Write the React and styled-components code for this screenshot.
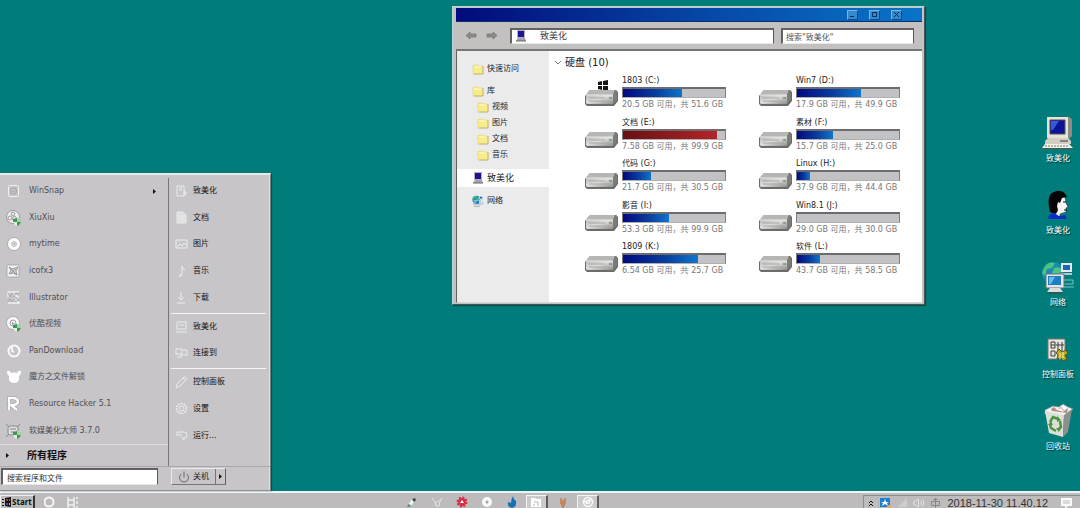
import styled, { createGlobalStyle, css } from "styled-components";
import { Power, Volume2 } from "lucide-react";

const GlobalStyle = createGlobalStyle`
    * {
        box-sizing: border-box;
    }
    body {
        margin: 0;
        overflow: hidden;
        font-family: "DejaVu Sans", "Noto Sans CJK SC", sans-serif;
        font-size: 8px;
        line-height: 12px;
        color: #1c1c1e;
    }
    button, input {
        font: inherit;
        color: inherit;
        padding: 0;
        margin: 0;
        border: 0;
        background: none;
    }
    input {
        min-width: 0;
        outline: none;
    }
    a {
        color: inherit;
        text-decoration: none;
    }
    ul {
        list-style: none;
        margin: 0;
        padding: 0;
    }
    svg {
        display: block;
        flex: none;
    }
`

const Screen = styled.div`
    display: flex;
    flex-direction: column;
    height: 100vh;
    background: #007c7a;
`
const Desktop = styled.main`
    position: relative;
    display: flex;
    justify-content: flex-end;
    flex: 1;
    min-height: 0;
`

/* desktop icons */
const Shortcuts = styled.ul`
    display: flex;
    flex-direction: column;
    gap: 6px;
    width: 44px;
    padding-top: 114px;
`
const Shortcut = styled.a`
    display: flex;
    flex-direction: column;
    align-items: center;
    justify-content: space-between;
    height: 66px;
    padding-bottom: 15px;
    color: #fff;
    white-space: nowrap;
    text-shadow: 1px 1px 1px #002c2c;
`
const ShortcutPicture = styled.span`
    display: flex;
    align-items: center;
    height: 38px;
`

/* start menu */
const StartMenu = styled.nav`
    position: absolute;
    left: 0;
    bottom: 0;
    display: grid;
    grid-template-columns: 169px 101px;
    padding-top: 3px;
    background: #c7c5c8;
    border-top: 2px solid #e4eaea;
    border-right: 1px solid #72807f;
    border-bottom: 1px solid #8e8e90;
    box-shadow: 1px 0 1px #075452, inset -1px 0 0 #e2e0e2;
`
const Programs = styled.ul`
    display: grid;
    grid-auto-rows: 1fr;
    height: 266px;
`
const ProgramLink = styled.a`
    display: flex;
    align-items: center;
    height: 100%;
    gap: 6px;
    padding: 0 11px 0 4px;
    color: #4f4e53;

    span {
        flex: 1;
    }
`
const MenuSide = styled.div`
    display: flex;
    flex-direction: column;
    border-right: ${(props) => (props.$line ? "1px solid #77757a" : "0")};
`
const AllPrograms = styled.button`
    display: flex;
    align-items: center;
    gap: 17px;
    height: 22px;
    padding-left: 5px;
    border-top: 1px solid #dddcde;
    font-size: 10px;
    font-weight: 700;
    color: #111;
`
const Places = styled.ul`
    display: grid;
    grid-auto-rows: 1fr;
    height: ${(props) => props.$height}px;
    margin: 0 4px 0 2px;
    padding-bottom: ${(props) => (props.$last ? 0 : 2)}px;
    border-bottom: ${(props) => (props.$last ? "0" : "1px solid #f4f4f4")};
`
const PlaceLink = styled.a`
    display: flex;
    align-items: center;
    gap: 5px;
    height: 100%;
    padding-left: 4px;
    color: #141416;
`
const MenuFooter = styled.div`
    display: flex;
    grid-column: 1 / 3;
    height: 24px;
    padding: 1px 0 5px 1px;
    gap: 13px;
    border-top: 1px solid #aaa8ab;
`
const sunken = css`
    background: #fff;
    border-top: 2px solid #626065;
    border-left: 2px solid #626065;
    border-right: 1px solid #55555a;
    border-bottom: 1px solid #e8e8e8;
`
const MenuSearch = styled.input`
    ${sunken}
    width: 157px;
    height: 17px;
    padding-left: 4px;
    color: #333;
`
const ShutDown = styled.div`
    display: flex;
    height: 17px;
    border: 1px solid #eceaec;
    border-right-color: #5f5d60;
    border-bottom-color: #77757a;

    button {
        display: flex;
        align-items: center;
        gap: 3px;
        padding: 0 6px 0 6px;
    }
    button + button {
        padding: 0 2px;
        border-left: 1px solid #77757a;
    }
`

/* explorer */
const Explorer = styled.section`
    position: absolute;
    top: 6px;
    left: 452px;
    width: 473px;
    padding: 1px 2px 1px 3px;
    background: #c4c2c4;
    border: 1px solid #b8d6d6;
    border-right-color: #455554;
    border-bottom-color: #455554;
    box-shadow: 1px 1px 1px #06504e;
`
const TitleBar = styled.header`
    display: flex;
    justify-content: flex-end;
    align-items: center;
    gap: 11px;
    height: 14px;
    padding-right: 20px;
    background: linear-gradient(90deg, #020a7c, #0644a4 50%, #0874c8);
    border-bottom: 1px solid #08306c;
`
const TitleButton = styled.button`
    display: grid;
    place-items: center;
    width: 11px;
    height: 10px;
    background: #3488cc;
    border: 1px solid #7cb4e0;
    border-right-color: #074c90;
    border-bottom-color: #074c90;
`
const ToolBar = styled.div`
    display: flex;
    align-items: center;
    height: 29px;
    gap: 7px;
    padding: 0 8px 0 9px;
    background: #c2c1c0;
    border-bottom: 2px solid #777675;
`
const NavButtons = styled.div`
    display: flex;
    gap: 9px;
    width: 38px;
`
const AddressBox = styled.label`
    ${sunken}
    display: flex;
    align-items: center;
    flex: 1;
    gap: 13px;
    height: 16px;
    padding-left: 3px;
    font-size: 9px;
    color: #3c3c3e;

    input {
        flex: 1;
    }
`
const SearchBox = styled.input`
    ${sunken}
    width: 133px;
    height: 16px;
    padding-left: 3px;
    color: #555;
`
const ExplorerBody = styled.div`
    display: grid;
    grid-template-columns: 92px 1fr;
    background: #fff;
    border-left: 1px solid #606062;
    border-bottom: 1px solid #d6d6d6;
`
const Tree = styled.nav`
    padding-top: 10px;
    background: #ebebeb;
`
const TreeLink = styled.a`
    display: flex;
    align-items: center;
    gap: 3px;
    height: ${(props) => (props.$active ? 18 : 16)}px;
    margin-top: ${(props) => (props.$gap || 0)}px;
    padding-left: ${(props) => (props.$child ? 20 : 15)}px;
    background: ${(props) => (props.$active ? "#fff" : "none")};
    font-size: ${(props) => (props.$active ? 9 : 8)}px;
`
const Files = styled.div`
    padding: 5px 22px 19px 5px;
`
const GroupTitle = styled.h2`
    display: flex;
    align-items: center;
    gap: 3px;
    margin: 0;
    font-size: 10px;
    line-height: 14px;
    font-weight: 400;
`
const Disks = styled.ul`
    display: grid;
    grid-template-columns: 1fr 1fr;
    grid-auto-rows: 1fr;
    column-gap: 33px;
    height: 213px;
    padding-left: 31px;
    padding-top: 5px;
`
const Disk = styled.li`
    display: grid;
    grid-template-columns: 34px 1fr;
    align-content: start;
    gap: 3px;
`
const DiskPicture = styled.div`
    padding-top: 4px;
`
const DiskInfo = styled.div`
    white-space: nowrap;
    color: #222;

    p {
        margin: 0;
    }
    p:last-child {
        color: #77777a;
    }
`
const Meter = styled.div`
    height: 11px;
    margin-bottom: 1px;
    background: #c2c1c4;
    border: 1px solid #7e7e80;
    border-top: 2px solid #6c6c70;
    border-bottom-color: #b0b0b2;
`
const MeterFill = styled.div`
    height: 100%;
    background: ${(props) =>
        props.$full
            ? "linear-gradient(90deg, #681012, #b4242a)"
            : "linear-gradient(90deg, #020a80, #0a3c9c 55%, #1074cc)"};
`

/* taskbar */
const TaskBar = styled.footer`
    display: flex;
    height: 17px;
    padding-top: 2px;
    background: #bdbbbc;
    border-top: 2px solid #eef2f2;
    overflow: hidden;
`
const TaskLeft = styled.div`
    display: flex;
    align-items: flex-start;
    gap: 6px;
    width: 399px;
`
const StartButton = styled.button`
    display: flex;
    align-items: center;
    gap: 1px;
    width: 35px;
    height: 14px;
    padding-left: 1px;
    border: 1px solid #f0f0f0;
    border-right: 2px solid #333;
    border-bottom-color: #333;
    font-family: "Noto Sans", sans-serif;
    font-weight: 700;
    color: #111;
`
const TaskButton = styled.button`
    display: grid;
    place-items: center;
    width: ${(props) => (props.$wide ? 25 : 17)}px;
    height: 16px;
    padding: 0 0 2px;
`
const TaskCentre = styled.div`
    display: flex;
    flex: 1;
    align-items: flex-start;
`
const OpenTask = styled(TaskButton)`
    width: 22px;
    margin: 0 2px;
    background: #cccacb;
    border: 1px solid #f4f4f4;
    border-right: 2px solid #5e5e60;
`
const Tray = styled.div`
    display: flex;
    align-items: center;
    gap: 5px;
    height: 14px;
    padding: 0 7px 0 4px;
    border-top: 1px solid #8c8c8e;
    border-left: 1px solid #8c8c8e;
`
const Clock = styled.time`
    font-family: "Liberation Sans", sans-serif;
    font-size: 11px;
    color: #333336;
    white-space: nowrap;
    padding: 0 7px 0 1px;
`

const Caret = () => (
    <svg width="5" height="7" viewBox="0 0 5 7">
        <path d="M1 1l3 2.500L1 6z" fill="#111" />
    </svg>
)

const Shield = () => (
    <g>
        <path d="M9 10l4-1 4 1v3q-1 3-4 4-3-1-4-4z" fill="#e4ece4" />
        <path d="M9 10l4-1v4H9zM13 13h4q-1 3-4 4z" fill="#3c9a4c" />
        <path d="M13 9l4 1v3h-4z" fill="#a8d0a8" />
    </g>
)

const programArt = {
    snap: (
        <g fill="none" stroke="#efefef">
            <rect x="4.500" y="3.500" width="10" height="11" rx="1" />
            <circle cx="9.500" cy="9" r="3" stroke="#a2a2a4" />
            <path d="M8 9h3" stroke="#a2a2a4" />
        </g>
    ),
    xiu: (
        <g>
            <circle cx="9" cy="8" r="6.500" fill="#f0f0f0" stroke="#98989a" />
            <circle cx="9" cy="5" r="1.800" fill="none" stroke="#98989a" />
            <circle cx="6" cy="9" r="2" fill="none" stroke="#98989a" />
            <circle cx="10.500" cy="9.500" r="2" fill="none" stroke="#98989a" />
            <Shield />
        </g>
    ),
    time: (
        <g>
            <circle cx="10" cy="9" r="6.500" fill="#fbfbfb" stroke="#98989a" strokeWidth=".7" />
            <circle cx="10" cy="9" r="2.500" fill="#ddd" stroke="#c4c4c6" />
            <path d="M10 8v1h1" stroke="#888" fill="none" strokeWidth=".8" />
        </g>
    ),
    fox: (
        <g>
            <rect x="3" y="3" width="12" height="12" rx="1" fill="#f2f2f2" stroke="#98989a" strokeWidth=".7" />
            <path d="M5 5l3 2 3-1 3-1-2 4 1 4-4-2-4 1 2-4z" fill="#d4d4d6" stroke="#8c8c90" strokeWidth=".8" />
            <path d="M5 5l8 8M7 11l5-4" stroke="#8c8c90" strokeWidth=".8" />
        </g>
    ),
    ai: (
        <g fill="none" stroke="#f0f0f0">
            <path d="M4 3h11M4 3v5M8 5l7 3M4 14h12M10 10l5 4" strokeWidth="1.500" />
            <path d="M4 4l2 4 2-4 2 4 2-4 3 1M4 13l2-3 2 3 2-3 2 3 3-3" stroke="#a0a0a3" strokeWidth=".8" />
        </g>
    ),
    youku: (
        <g>
            <circle cx="9" cy="8" r="6.500" fill="#f8f8f8" stroke="#98989a" strokeWidth=".7" />
            <circle cx="9" cy="8" r="3" fill="none" stroke="#a0a0a3" />
            <path d="M8 7v3l3-1.500z" fill="#a0a0a3" />
            <Shield />
        </g>
    ),
    pan: (
        <g>
            <circle cx="10" cy="9" r="5.500" fill="none" stroke="#fafafa" strokeWidth="2" />
            <path d="M8 4v5l2 1" fill="none" stroke="#f4f4f4" strokeWidth="2" />
        </g>
    ),
    cube: (
        <path d="M3 3q3-1 4 2 3-1 6 0 1-3 4-2 0 4-2 5 1 7-5 7t-5-7Q3 7 3 3z" fill="#fff" />
    ),
    res: (
        <g fill="none">
            <path d="M5 15V3h5q4 1 4 3.500T10 10H7l6 5" stroke="#8c8c90" strokeWidth="3.500" />
            <path d="M5 15V3h5q4 1 4 3.500T10 10H7l6 5" stroke="#fff" strokeWidth="2.500" />
        </g>
    ),
    master: (
        <g>
            <rect x="4" y="4" width="10" height="9" rx="2" fill="#dedee0" stroke="#88888b" />
            <path d="M2 2l3 3M16 2l-3 3M2 15l3-3M6 7h6M7 10h4" stroke="#88888b" fill="none" />
            <Shield />
        </g>
    ),
}

const programs = [
    { name: "WinSnap", icon: "snap", more: true },
    { name: "XiuXiu", icon: "xiu" },
    { name: "mytime", icon: "time" },
    { name: "icofx3", icon: "fox" },
    { name: "Illustrator", icon: "ai" },
    { name: "优酷视频", icon: "youku" },
    { name: "PanDownload", icon: "pan" },
    { name: "魔方之文件解锁", icon: "cube" },
    { name: "Resource Hacker 5.1", icon: "res" },
    { name: "软媒美化大师 3.7.0", icon: "master" },
]

const placeArt = {
    user: <path d="M2 1h7v10H2zM4 3h3M4 5h3M10 5v6M8 8h4" />,
    doc: <path d="M2 1h6l3 3v8H2zM4 5h5M4 7h5M4 9h5" fill="#dedede" />,
    image: <path d="M1 2h11v8H1zM2 9l3-3 2 2 2-3 3 3M4 4h1" />,
    music: <path d="M7 10V1q0 3 3 4M7 10q-3-1-3 1t3-1" />,
    down: <path d="M6 1v8M3 6l3 3 3-3M2 12h8" />,
    pc: <path d="M2 1h9v7H2zM1 11h11M4 4h5" />,
    link: <path d="M1 2h6v5H1zM8 3h4v5H6v3M2 10h3" />,
    panel: <path d="M1 12l1-4 7-7q2 0 3 2l-7 7zM8 2l3 3" />,
    gear: (
        <g>
            <circle cx="6.500" cy="6.500" r="5" strokeDasharray="2 .8" strokeWidth="1.500" />
            <circle cx="6.500" cy="6.500" r="2.500" />
        </g>
    ),
    run: <path d="M2 7V3h7q3 0 3 3t-3 3M7 6H3M6 8l3 3v-3" />,
}

const places = [
    {
        height: 136,
        items: [
            ["致美化", "user"],
            ["文档", "doc"],
            ["图片", "image"],
            ["音乐", "music"],
            ["下载", "down"],
        ],
    },
    {
        height: 55,
        items: [
            ["致美化", "pc"],
            ["连接到", "link"],
        ],
    },
    {
        height: 80,
        items: [
            ["控制面板", "panel"],
            ["设置", "gear"],
            ["运行...", "run"],
        ],
    },
]

const disks = [
    { name: "1803 (C:)", free: "20.5", total: "51.6", used: 58, system: true },
    { name: "Win7 (D:)", free: "17.9", total: "49.9", used: 63 },
    { name: "文档 (E:)", free: "7.58", total: "99.9", used: 92, full: true },
    { name: "素材 (F:)", free: "15.7", total: "25.0", used: 35 },
    { name: "代码 (G:)", free: "21.7", total: "30.5", used: 27 },
    { name: "Linux (H:)", free: "37.9", total: "44.4", used: 13 },
    { name: "影音 (I:)", free: "53.3", total: "99.9", used: 45 },
    { name: "Win8.1 (J:)", free: "29.0", total: "30.0", used: 0 },
    { name: "1809 (K:)", free: "6.54", total: "25.7", used: 74 },
    { name: "软件 (L:)", free: "43.7", total: "58.5", used: 23 },
]

const Folder = () => (
    <svg width="12" height="11" viewBox="0 0 12 11">
        <path d="M1 1h5l1 1h4v8H1z" fill="#f6ec8c" stroke="#e2d27a" strokeWidth=".6" />
        <path d="M11 2v8H2" stroke="#c4b878" fill="none" />
        <path d="M2 3h7" stroke="#fffbd0" />
    </svg>
)

const Computer = ({ size }) => (
    <svg width={size} height={size} viewBox="0 0 34 34">
        <path d="M8 1h20l3 2v17l-3 3H8z" fill="#8f8b84" />
        <path d="M6 1h21v21H6z" fill="#e6e2d8" />
        <path d="M9 4h15v14H9z" fill="#0c1298" stroke="#55534e" />
        <path d="M10 5h8l-6 9h-2z" fill="#3458d8" />
        <path d="M7 22h20l3 3v3H4v-3z" fill="#d2cec4" />
        <path d="M19 25h8" stroke="#333" />
        <path d="M4 28h24l4 4H1z" fill="#f4f0e8" />
        <path d="M4 30h24" stroke="#77746e" strokeDasharray="2 1" />
        <path d="M1 32h31v1H1z" fill="#55534e" />
    </svg>
)

const SmallComputer = () => (
    <svg width="12" height="12" viewBox="0 0 12 12">
        <path d="M2 0h8v8H2z" fill="#b4b0c0" />
        <path d="M3 1h6v6H3z" fill="#1c1490" />
        <path d="M3 8h7l1 3H1z" fill="#a4a2ac" />
        <path d="M1 11h10" stroke="#66646e" />
    </svg>
)

const Globe = ({ size }) => (
    <svg width={size} height={size} viewBox="0 0 34 34">
        <circle cx="12" cy="13" r="11" fill="#1b8ab4" />
        <path d="M3 8q4-7 11-5l-3 5-5 1-2 7-3-3zM13 8q6-2 8 2l-4 5-6-2z" fill="#4cc47c" />
        <path d="M20 3h11v9H20z" fill="#e4eaf0" />
        <path d="M22 5h7v5h-7z" fill="#1668b4" />
        <path d="M19 13h12v2H19z" fill="#bcc4c8" />
        <path d="M5 14h18v14H5z" fill="#e2e6ea" stroke="#66727a" />
        <path d="M7 16h13v9H7z" fill="#1c7cc4" />
        <path d="M8 17h6l-4 7H8z" fill="#68bae8" />
        <path d="M9 28h10l3 4H6z" fill="#dcdcdc" />
        <path d="M6 33h16" stroke="#444" />
        <path d="M23 20h9v4h-8M22 27h11" stroke="#70c4c8" fill="none" />
    </svg>
)

const Head = () => (
    <svg width="24" height="30" viewBox="0 0 24 30">
        <path d="M13 4l6 3 1 6 2 4-2 1v4l-6 2v4H8l1-13z" fill="#f6f6f8" stroke="#333" strokeWidth=".6" />
        <path d="M3 17Q1 4 8 2q9-4 13 5l-5 1-2 5-2-1-1 4 1 4-2 4-6-2z" fill="#050508" />
        <path d="M17 12h3M18 20h3" stroke="#111" />
        <path d="M2 29q0-5 6-6l5 3 6-1 2 4z" fill="#0c2cc8" />
    </svg>
)

const ControlPanel = () => (
    <svg width="22" height="25" viewBox="0 0 22 25">
        <path d="M1 2h17v20H1z" fill="#e6e6e0" stroke="#77776f" />
        <path d="M4 5h4v6H4zM11 5v9M15 5v9M4 14h4v5H4zM9 8h8M4 8h4" stroke="#3a3a38" fill="none" />
        <path d="M12 12l3 3 4-2 2 4-3 1 2 4-4 2-2-3-4 1 1-4-2-2z" fill="#b8ab2c" stroke="#55501c" />
        <path d="M13 16v6M16 15v6" stroke="#fff49a" />
    </svg>
)

const RecycleBin = () => (
    <svg width="31" height="36" viewBox="0 0 31 36">
        <path d="M2 7L10 3l6 1 4-3 5 3 5 2-7 7-21-2z" fill="#f4f4f2" stroke="#8a8c88" strokeWidth=".7" />
        <path d="M2 8l19 4-1 22L6 30z" fill="#dcded8" />
        <path d="M21 12l8-6-4 23-5 5z" fill="#8d908c" />
        <path d="M8 6l3-2 3 3 4-3 3 4 4-3-1 5-15-2z" fill="#b28d8a" />
        <path d="M10 6l4 1 4-2 3 4z" fill="#fff" />
        <path d="M7 19l3-5 5 2M17 18l1 6-3 3M13 28l-5-3-1-4" stroke="#4b963c" strokeWidth="2.500" fill="none" />
        <path d="M14 13l4 4-4 2zM16 29l-3-4 5 0zM5 22l3-4 2 4z" fill="#4b963c" />
    </svg>
)

const Drive = ({ system }) => (
    <svg width="34" height="31" viewBox="0 0 34 31">
        <defs>
            <linearGradient id="metal" x1="0" y1="0" x2="1" y2="1">
                <stop offset="0" stopColor="#b8b8b6" />
                <stop offset=".45" stopColor="#dededc" />
                <stop offset="1" stopColor="#8e8e8b" />
            </linearGradient>
        </defs>
        {system && (
            <path
                d="M13 3l4-1v4h-4zM18 2l5-1v5h-5zM13 7h4v4l-4-1zM18 7h5v5l-5-1z"
                fill="#151515"
            />
        )}
        <path d="M5 11h26l2 2v9l-4 5H2l-2-2v-8z" fill="#6c6c6a" />
        <path d="M5 11h25l-2 5H1z" fill="#b6b6b4" />
        <path d="M1 16h27v9H2l-1-1z" fill="url(#metal)" />
        <path d="M28 16l3-5 1 2v8l-4 4z" fill="#7c7c7a" />
        <path d="M4 19h16M4 22h21" stroke="#a6a6a4" />
        <path d="M1 16h27" stroke="#e8e8e6" />
        <path d="M24 19h3" stroke="#448058" />
    </svg>
)

const Arrow = ({ flip }) => (
    <svg width="12" height="9" viewBox="0 0 12 9">
        <path
            d={flip ? "M11 4.500L7 1v2H1v3h6v2z" : "M1 4.500L5 1v2h6v3H5v2z"}
            fill="#8b8a88"
            stroke="#74736f"
            strokeWidth=".7"
        />
    </svg>
)

const shortcuts = [
    ["致美化", <Computer size={34} />],
    ["致美化", <Head />],
    ["网络", <Globe size={34} />],
    ["控制面板", <ControlPanel />],
    ["回收站", <RecycleBin />],
]

const ExplorerWindow = () => (
    <Explorer aria-label="致美化">
        <TitleBar>
            <TitleButton aria-label="最小化">
                <svg width="7" height="7"><path d="M1 5.500h4" stroke="#062c60" /></svg>
            </TitleButton>
            <TitleButton aria-label="最大化">
                <svg width="7" height="7"><path d="M1.500 1.500h4v4h-4z" stroke="#062c60" fill="none" /></svg>
            </TitleButton>
            <TitleButton aria-label="关闭">
                <svg width="7" height="7"><path d="M1 1l5 5M6 1L1 6" stroke="#062c60" /></svg>
            </TitleButton>
        </TitleBar>
        <ToolBar>
            <NavButtons>
                <button aria-label="后退"><Arrow /></button>
                <button aria-label="前进"><Arrow flip /></button>
            </NavButtons>
            <AddressBox>
                <SmallComputer />
                <input aria-label="地址" defaultValue="致美化" />
            </AddressBox>
            <SearchBox aria-label="搜索" defaultValue={'搜索"致美化"'} />
        </ToolBar>
        <ExplorerBody>
            <Tree>
                <TreeLink href="#quick"><Folder />快速访问</TreeLink>
                <TreeLink href="#library" $gap={6}><Folder />库</TreeLink>
                <TreeLink href="#video" $child><Folder />视频</TreeLink>
                <TreeLink href="#picture" $child><Folder />图片</TreeLink>
                <TreeLink href="#document" $child><Folder />文档</TreeLink>
                <TreeLink href="#music" $child><Folder />音乐</TreeLink>
                <TreeLink href="#computer" $active $gap={6}><SmallComputer />致美化</TreeLink>
                <TreeLink href="#network" $gap={6}><Globe size={12} />网络</TreeLink>
            </Tree>
            <Files>
                <GroupTitle>
                    <svg width="8" height="6"><path d="M1 1l3 3 3-3" stroke="#77777a" fill="none" /></svg>
                    硬盘 (10)
                </GroupTitle>
                <Disks>
                    {disks.map((disk) => (
                        <Disk key={disk.name}>
                            <DiskPicture><Drive system={disk.system} /></DiskPicture>
                            <DiskInfo>
                                <p>{disk.name}</p>
                                <Meter>
                                    <MeterFill $full={disk.full} style={{ width: `${disk.used}%` }} />
                                </Meter>
                                <p>{disk.free} GB 可用，共 {disk.total} GB</p>
                            </DiskInfo>
                        </Disk>
                    ))}
                </Disks>
            </Files>
        </ExplorerBody>
    </Explorer>
)

const StartPanel = () => (
    <StartMenu>
        <MenuSide $line>
            <Programs>
                {programs.map((item) => (
                    <li key={item.name}>
                        <ProgramLink href="#program">
                            <svg width="19" height="18" viewBox="0 0 19 18">{programArt[item.icon]}</svg>
                            <span>{item.name}</span>
                            {item.more && <Caret />}
                        </ProgramLink>
                    </li>
                ))}
            </Programs>
            <AllPrograms><Caret />所有程序</AllPrograms>
        </MenuSide>
        <MenuSide>
            {places.map((group, index) => (
                <Places key={group.height} $height={group.height} $last={index === 2}>
                    {group.items.map(([name, icon]) => (
                        <li key={name}>
                            <PlaceLink href="#place">
                                <svg width="13" height="13" viewBox="0 0 13 13" fill="none" stroke="#ebebed">
                                    {placeArt[icon]}
                                </svg>
                                {name}
                            </PlaceLink>
                        </li>
                    ))}
                </Places>
            ))}
        </MenuSide>
        <MenuFooter>
            <MenuSearch aria-label="搜索程序和文件" defaultValue="搜索程序和文件" />
            <ShutDown>
                <button><Power size={12} strokeWidth={2} color="#66666a" />关机</button>
                <button aria-label="更多"><Caret /></button>
            </ShutDown>
        </MenuFooter>
    </StartMenu>
)

const App = () => {
    return (
        <>
            <GlobalStyle />
            <Screen>
                <Desktop>
                    <Shortcuts>
                        {shortcuts.map(([name, picture], index) => (
                            <li key={index}>
                                <Shortcut href="#open">
                                    <ShortcutPicture>{picture}</ShortcutPicture>
                                    {name}
                                </Shortcut>
                            </li>
                        ))}
                    </Shortcuts>
                    <ExplorerWindow />
                    <StartPanel />
                </Desktop>
                <TaskBar>
                    <TaskLeft>
                        <StartButton>
                            <svg width="9" height="10" viewBox="0 0 9 10">
                                <path d="M0 2h2v1H0zM0 5h2v1H0zM0 8h2v1H0zM3 1l6-1v10l-6-1z" fill="#151515" />
                                <path d="M4 2h2v2H4z" fill="#b43434" />
                                <path d="M7 2h1v2H7z" fill="#3c9c4c" />
                                <path d="M4 6h2v2H4z" fill="#3454b4" />
                                <path d="M7 6h1v2H7z" fill="#d4bc3c" />
                            </svg>
                            Start
                        </StartButton>
                        <TaskButton aria-label="Cortana">
                            <svg width="12" height="12"><circle cx="5" cy="6" r="4.500" fill="none" stroke="#f6f6f6" strokeWidth="2" /></svg>
                        </TaskButton>
                        <TaskButton aria-label="任务视图">
                            <svg width="12" height="11"><path d="M1 0v3h6V0M1 11V8h6v3M1 3v5M7 3v5M10 0v2M10 4v3M10 9v2" fill="none" stroke="#f2f2f2" strokeWidth="1.500" /></svg>
                        </TaskButton>
                    </TaskLeft>
                    <TaskCentre>
                        <TaskButton $wide aria-label="画笔">
                            <svg width="12" height="12"><path d="M1 10l6-8 3 1-5 7z" fill="#f0f0f0" /><path d="M6 3l3-1 1 2-2 2z" fill="#2c4448" /><path d="M2 8l3 1-1 2H1z" fill="#4c9c84" /></svg>
                        </TaskButton>
                        <TaskButton $wide aria-label="工具">
                            <svg width="12" height="12"><path d="M1 2l3 4 1 4h3l1-5 2-3M5 7l3-3" fill="none" stroke="#e8e8e8" /></svg>
                        </TaskButton>
                        <TaskButton $wide aria-label="齿轮">
                            <svg width="12" height="12"><circle cx="6" cy="6" r="4" fill="#d43048" /><circle cx="6" cy="6" r="4.500" fill="none" stroke="#d43048" strokeWidth="2" strokeDasharray="2 1.500" /><path d="M4 7l2-3 2 3z" fill="#fff" /></svg>
                        </TaskButton>
                        <TaskButton $wide aria-label="光盘">
                            <svg width="12" height="12"><circle cx="6" cy="6" r="5" fill="#fafafa" /><circle cx="6" cy="6" r="1.500" fill="#a4a4a6" /></svg>
                        </TaskButton>
                        <TaskButton $wide aria-label="火焰">
                            <svg width="12" height="12"><path d="M7 0q0 3 3 5 1 6-4 7-5-1-4-6l3 1q0-4 2-7z" fill="#1470b4" /></svg>
                        </TaskButton>
                        <OpenTask aria-label="文件夹">
                            <svg width="13" height="11"><path d="M1 1h4l1 1h5v8H1z" fill="#fff" /><path d="M4 5h4M4 7v2M8 5v4" stroke="#b4b4b6" /></svg>
                        </OpenTask>
                        <TaskButton $wide aria-label="编辑">
                            <svg width="12" height="12"><path d="M4 2v5l2 4 2-4V2M6 4v4" fill="none" stroke="#c47a48" strokeWidth="1.500" /></svg>
                        </TaskButton>
                        <OpenTask aria-label="浏览器">
                            <svg width="12" height="12" fill="none" stroke="#fafafa" strokeWidth="1.500">
                                <circle cx="6" cy="6" r="4.500" />
                                <circle cx="6" cy="6" r="1.500" />
                                <path d="M6 4h4M5 8l-3-4" />
                            </svg>
                        </OpenTask>
                    </TaskCentre>
                    <Tray>
                        <svg width="6" height="8"><path d="M1 4l2-2 2 2M1 7l2-2 2 2" fill="none" stroke="#111" /></svg>
                        <svg width="13" height="12"><path d="M1 1h10v9H1z" fill="#1c80cc" /><path d="M6 2l1 3h3L8 6l1 3-3-2-3 2 1-3-2-1h3z" fill="#fff" /><circle cx="10" cy="10" r="2" fill="#e8ac68" /></svg>
                        <svg width="11" height="11"><path d="M1 10L10 1v9z" fill="#cecdcf" /></svg>
                        <Volume2 size={12} color="#e8e8e8" />
                        <svg width="11" height="12"><path d="M1.500 4.500h8v4h-8zM5.500 1v11M3.500 2.500h4" fill="none" stroke="#88888b" /></svg>
                        <Clock>2018-11-30 11.40.12</Clock>
                        <svg width="13" height="12"><path d="M1 1h11v8H8l-3 3V9H1z" fill="#fafafa" /><path d="M3 4h7M3 6h7" stroke="#bcbcbe" /></svg>
                    </Tray>
                </TaskBar>
            </Screen>
        </>
    )
}

export default App;
